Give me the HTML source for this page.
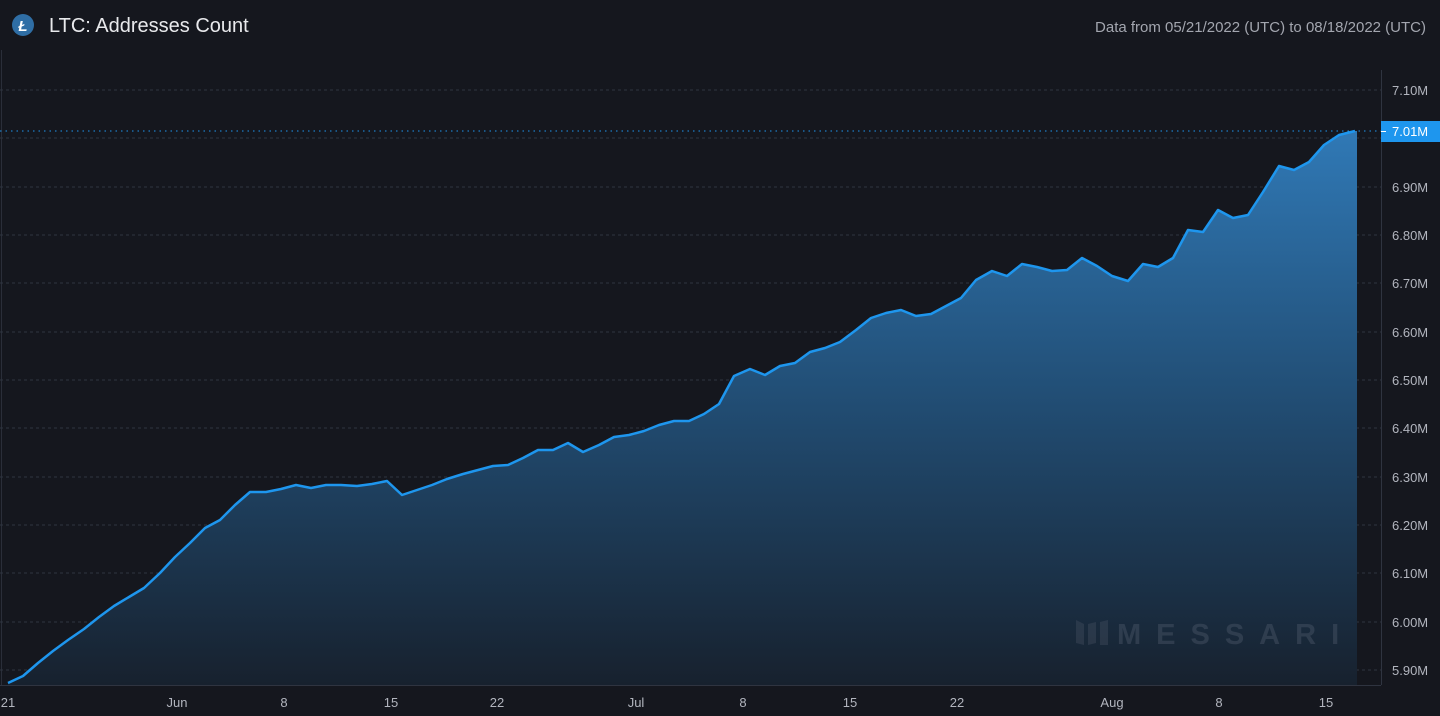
<!DOCTYPE html>
<html><head><meta charset="utf-8"><style>
html,body{margin:0;padding:0;background:#15171e;width:1440px;height:716px;overflow:hidden;font-family:"Liberation Sans",sans-serif}
</style></head><body>
<svg width="1440" height="716" xmlns="http://www.w3.org/2000/svg" style="position:absolute;left:0;top:0">
<defs><linearGradient id="g" x1="0" y1="130" x2="0" y2="685" gradientUnits="userSpaceOnUse">
<stop offset="0" stop-color="#3079b6"/><stop offset="0.5" stop-color="#214c72"/><stop offset="1" stop-color="#17212e"/></linearGradient></defs>
<rect x="0" y="0" width="1440" height="716" fill="#15171e"/>
<line x1="1.5" y1="50" x2="1.5" y2="685" stroke="#2a2e39"/>
<g stroke="#2f3440" stroke-dasharray="3,3">
<line x1="0" y1="90" x2="1381" y2="90"/><line x1="0" y1="138" x2="1381" y2="138"/><line x1="0" y1="187" x2="1381" y2="187"/><line x1="0" y1="235" x2="1381" y2="235"/><line x1="0" y1="283" x2="1381" y2="283"/><line x1="0" y1="332" x2="1381" y2="332"/><line x1="0" y1="380" x2="1381" y2="380"/><line x1="0" y1="428" x2="1381" y2="428"/><line x1="0" y1="477" x2="1381" y2="477"/><line x1="0" y1="525" x2="1381" y2="525"/><line x1="0" y1="573" x2="1381" y2="573"/><line x1="0" y1="622" x2="1381" y2="622"/><line x1="0" y1="670" x2="1381" y2="670"/>
</g>
<polygon fill="url(#g)" points="8,685 8,683 23,676 38,663 53,651 68,640 84,629 99,617 114,606 129,597 144,588 160,573 175,557 190,543 205,528 220,520 235,505 250,492 266,492 281,489 296,485 311,488 326,485 341,485 357,486 372,484 387,481 402,495 417,490 432,485 447,479 463,474 478,470 493,466 508,465 523,458 538,450 553,450 568,443 583,452 599,445 614,437 629,435 644,431 659,425 674,421 689,421 704,414 719,404 734,376 750,369 765,375 780,366 795,363 810,352 825,348 840,342 856,330 871,318 886,313 901,310 916,316 931,314 946,306 961,298 976,280 992,271 1007,276 1022,264 1037,267 1052,271 1067,270 1082,258 1097,266 1112,276 1128,281 1143,264 1158,267 1173,258 1188,230 1203,232 1218,210 1233,218 1248,215 1263,192 1279,166 1294,170 1309,162 1324,145 1339,135 1355,131 1357,131 1357,685"/>
<polyline fill="none" stroke="#1e96ee" stroke-width="2.5" stroke-linejoin="round" points="8,683 23,676 38,663 53,651 68,640 84,629 99,617 114,606 129,597 144,588 160,573 175,557 190,543 205,528 220,520 235,505 250,492 266,492 281,489 296,485 311,488 326,485 341,485 357,486 372,484 387,481 402,495 417,490 432,485 447,479 463,474 478,470 493,466 508,465 523,458 538,450 553,450 568,443 583,452 599,445 614,437 629,435 644,431 659,425 674,421 689,421 704,414 719,404 734,376 750,369 765,375 780,366 795,363 810,352 825,348 840,342 856,330 871,318 886,313 901,310 916,316 931,314 946,306 961,298 976,280 992,271 1007,276 1022,264 1037,267 1052,271 1067,270 1082,258 1097,266 1112,276 1128,281 1143,264 1158,267 1173,258 1188,230 1203,232 1218,210 1233,218 1248,215 1263,192 1279,166 1294,170 1309,162 1324,145 1339,135 1355,131"/>
<line x1="0" y1="131" x2="1381" y2="131" stroke="#1e96ee" stroke-dasharray="1.5,4"/>
<g opacity="0.35" fill="#4a5566">
<polygon points="1076,620 1084,624 1084,645 1076,643"/><polygon points="1088,624 1096,622 1096,643 1088,645"/><polygon points="1100,622 1108,620 1108,645 1100,645"/>
<text x="1117" y="644" font-size="29" font-weight="bold" letter-spacing="15" fill="#5a6475">MESSARI</text>
</g>
<line x1="1381.5" y1="70" x2="1381.5" y2="685" stroke="#2f3440"/>
<line x1="0" y1="685.5" x2="1381" y2="685.5" stroke="#2f3440"/>
<g font-size="13" fill="#b2b5be">
<text x="1392" y="95">7.10M</text><text x="1392" y="192">6.90M</text><text x="1392" y="240">6.80M</text><text x="1392" y="288">6.70M</text><text x="1392" y="337">6.60M</text><text x="1392" y="385">6.50M</text><text x="1392" y="433">6.40M</text><text x="1392" y="482">6.30M</text><text x="1392" y="530">6.20M</text><text x="1392" y="578">6.10M</text><text x="1392" y="627">6.00M</text><text x="1392" y="675">5.90M</text>
</g>
<rect x="1381" y="121" width="59" height="21" fill="#1e96ee"/>
<line x1="1381" y1="131.5" x2="1386" y2="131.5" stroke="#fff"/>
<text x="1392" y="136" font-size="13" fill="#fff">7.01M</text>
<g font-size="13" fill="#b2b5be" text-anchor="middle">
<text x="8" y="707">21</text><text x="177" y="707">Jun</text><text x="284" y="707">8</text><text x="391" y="707">15</text><text x="497" y="707">22</text><text x="636" y="707">Jul</text><text x="743" y="707">8</text><text x="850" y="707">15</text><text x="957" y="707">22</text><text x="1112" y="707">Aug</text><text x="1219" y="707">8</text><text x="1326" y="707">15</text>
</g>
<circle cx="23" cy="25" r="11" fill="#2f6ea5"/>
<text x="23" y="31" font-size="15" font-weight="bold" font-style="italic" fill="#fff" text-anchor="middle">Ł</text>
<text x="49" y="32" font-size="20" fill="#e8e9ec">LTC: Addresses Count</text>
<text x="1426" y="32" font-size="15" fill="#a3a6af" text-anchor="end">Data from 05/21/2022 (UTC) to 08/18/2022 (UTC)</text>
</svg>
</body></html>
